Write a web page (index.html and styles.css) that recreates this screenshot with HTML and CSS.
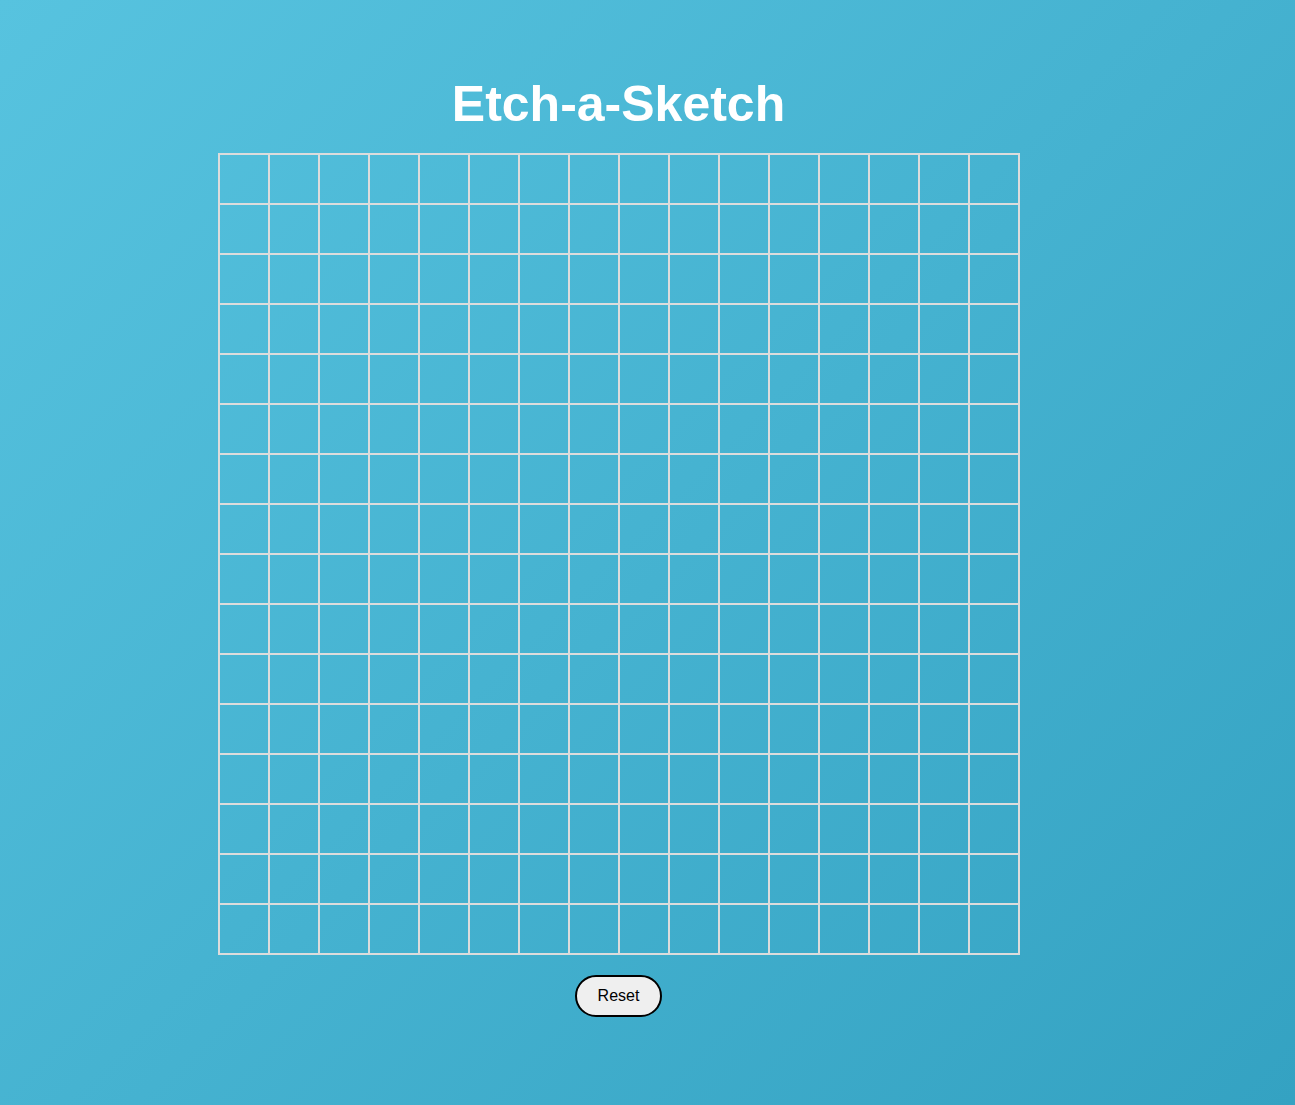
FILE: index.html
```html
<!DOCTYPE html>
<html lang="en">
<head>
<meta charset="utf-8">
<title>Etch-a-Sketch</title>
<link rel="stylesheet" href="styles.css">
</head>
<body>
<main class="app">
  <h1 class="title">Etch-a-Sketch</h1>
  <div class="grid" id="grid"></div>
  <button class="reset" type="button">Reset</button>
</main>
<script>
  var g = document.getElementById('grid');
  for (var i = 0; i < 256; i++) {
    var c = document.createElement('div');
    c.className = 'cell';
    g.appendChild(c);
  }
</script>
</body>
</html>
```
FILE: styles.css
```css
html, body {
  margin: 0;
  padding: 0;
  min-height: 100vh;
}
body {
  background: linear-gradient(135deg, #57c3df 0%, #34a2c2 100%);
  background-attachment: fixed;
  font-family: "Liberation Sans", Arial, sans-serif;
}
.app {
  width: 1237px;
  display: flex;
  flex-direction: column;
  align-items: center;
  padding-top: 75px;
}
.title {
  margin: 0 0 20px;
  font-size: 50px;
  line-height: 58px;
  font-weight: bold;
  color: #ffffff;
}
.grid {
  display: grid;
  grid-template-columns: repeat(16, 50px);
  grid-template-rows: repeat(16, 50px);
  border: 1px solid #dcdcdc;
}
.cell {
  box-sizing: border-box;
  border: 1px solid #dcdcdc;
}
.reset {
  margin-top: 20px;
  padding: 10px 21px 10px 21px;
  font-family: "Liberation Sans", Arial, sans-serif;
  font-size: 16px;
  line-height: 18px;
  color: #000;
  background: #efefef;
  border: 2px solid #000;
  border-radius: 21px;
  cursor: pointer;
}
```
